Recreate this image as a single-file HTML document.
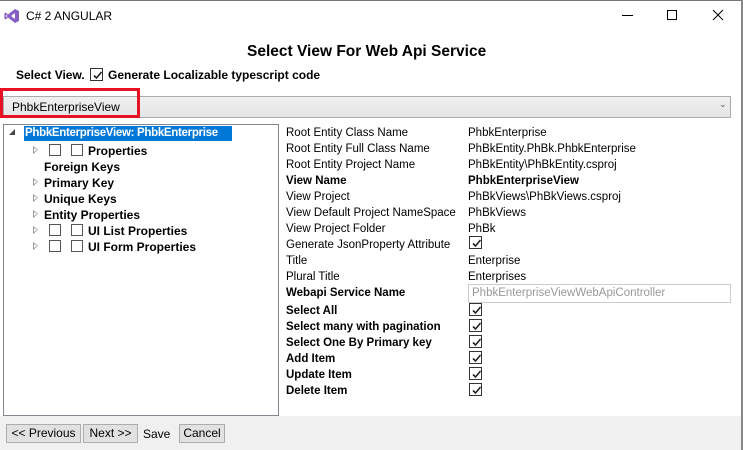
<!DOCTYPE html>
<html><head><meta charset="utf-8"><style>
*{margin:0;padding:0;box-sizing:border-box}
body{width:743px;height:450px;background:#fff;font-family:"Liberation Sans",sans-serif;font-size:11.5px;color:#000;position:relative;overflow:hidden}
.a{position:absolute;white-space:nowrap}
.b{font-weight:bold}
.cb{position:absolute;width:13px;height:13px;border:1px solid #333;background:#fff}
.cb svg{position:absolute;left:1px;top:1px}
.eb{position:absolute;width:12px;height:12px;border:1px solid #555;background:#fff}
.tri{position:absolute;width:0;height:0;border-left:5px solid #999;border-top:4px solid transparent;border-bottom:4px solid transparent}
.tri:after{content:"";position:absolute;left:-4px;top:-2px;border-left:3px solid #fff;border-top:2px solid transparent;border-bottom:2px solid transparent}
.btn{position:absolute;top:424px;height:19px;border:1px solid #adadad;background:#e1e1e1;font-size:12px;line-height:17px;padding:0 3px;white-space:nowrap;overflow:hidden;text-align:center}
.r{top:0}
</style></head><body>
<div class="a" style="left:0;top:0;width:743px;height:1px;background:#777"></div>
<div class="a" style="left:741px;top:0;width:2px;height:450px;background:#888"></div>
<svg class="a" style="left:4px;top:8px" width="16" height="16" viewBox="0 0 16 16"><path d="M11 1 L15 3 V13 L11 15 L4 9.5 L1.5 11.5 L0.5 11 V5 L1.5 4.5 L4 6.5 Z M11 5 L7 8 L11 11 Z M2 6.5 V9.5 L3.5 8 Z" fill="#865fc5"/></svg>
<div class="a" style="left:26px;top:9px;font-size:12px">C# 2 ANGULAR</div>
<div class="a" style="left:622px;top:15px;width:11px;height:1px;background:#000"></div>
<div class="a" style="left:667px;top:10px;width:10px;height:10px;border:1px solid #000"></div>
<svg class="a" style="left:712px;top:9px" width="12" height="12"><path d="M1 1L11 11M11 1L1 11" stroke="#000" stroke-width="1"/></svg>
<div class="a b" style="left:247px;top:43px;font-size:15.5px">Select View For Web Api Service</div>
<div class="a b" style="left:16px;top:68px;font-size:12px">Select View.</div>
<div class="cb" style="left:90px;top:68px"><svg width="11" height="11"><path d="M2 5.5L4.5 8L9.5 2" stroke="#222" stroke-width="1.6" fill="none"/></svg></div>
<div class="a b" style="left:108px;top:68px;font-size:12px">Generate Localizable typescript code</div>
<div class="a" style="left:3px;top:96px;width:728px;height:22px;border:1px solid #acacac;background:linear-gradient(#f0f0f0,#e5e5e5)"></div>
<div class="a" style="left:12px;top:100px;font-size:12px">PhbkEnterpriseView</div>
<div class="a" style="left:719px;top:99px;font-size:9px;color:#555">&#8964;</div>
<div class="a" style="left:0;top:88px;width:140px;height:30px;border:3px solid #e81123"></div>
<div class="a" style="left:3px;top:124px;width:276px;height:292px;border:1px solid #828790;background:#fff"></div>
<div class="a" style="left:9px;top:129px;width:0;height:0;border-right:6px solid #444;border-top:6px solid transparent"></div>
<div class="a b" style="left:24px;top:126px;width:208px;height:15px;background:#0078d7;color:#fff;padding-left:1px;line-height:15px;font-size:11.5px;letter-spacing:-0.3px;overflow:hidden">PhbkEnterpriseView: PhbkEnterprise</div>
<div class="tri" style="left:33px;top:146px"></div><div class="eb" style="left:49px;top:144px"></div><div class="eb" style="left:71px;top:144px"></div>
<div class="a b" style="left:88px;top:144px;font-size:12px">Properties</div>
<div class="a b" style="left:44px;top:160px;font-size:12px">Foreign Keys</div>
<div class="tri" style="left:33px;top:178px"></div><div class="a b" style="left:44px;top:176px;font-size:12px">Primary Key</div>
<div class="tri" style="left:33px;top:194px"></div><div class="a b" style="left:44px;top:192px;font-size:12px">Unique Keys</div>
<div class="tri" style="left:33px;top:210px"></div><div class="a b" style="left:44px;top:208px;font-size:12px">Entity Properties</div>
<div class="tri" style="left:33px;top:226px"></div><div class="eb" style="left:49px;top:224px"></div><div class="eb" style="left:71px;top:224px"></div><div class="a b" style="left:88px;top:224px;font-size:12px">UI List Properties</div>
<div class="tri" style="left:33px;top:242px"></div><div class="eb" style="left:49px;top:240px"></div><div class="eb" style="left:71px;top:240px"></div><div class="a b" style="left:88px;top:240px;font-size:12px">UI Form Properties</div>

<div class="a" style="left:286px;top:127px">Root Entity Class Name</div><div class="a" style="left:468px;top:127px">PhbkEnterprise</div>
<div class="a" style="left:286px;top:143px">Root Entity Full Class Name</div><div class="a" style="left:468px;top:143px">PhBkEntity.PhBk.PhbkEnterprise</div>
<div class="a" style="left:286px;top:159px">Root Entity Project Name</div><div class="a" style="left:468px;top:159px">PhBkEntity\PhBkEntity.csproj</div>
<div class="a b" style="left:286px;top:175px">View Name</div><div class="a b" style="left:468px;top:175px">PhbkEnterpriseView</div>
<div class="a" style="left:286px;top:191px">View Project</div><div class="a" style="left:468px;top:191px">PhBkViews\PhBkViews.csproj</div>
<div class="a" style="left:286px;top:207px">View Default Project NameSpace</div><div class="a" style="left:468px;top:207px">PhBkViews</div>
<div class="a" style="left:286px;top:223px">View Project Folder</div><div class="a" style="left:468px;top:223px">PhBk</div>
<div class="a" style="left:286px;top:239px">Generate JsonProperty Attribute</div>
<div class="a" style="left:286px;top:255px">Title</div><div class="a" style="left:468px;top:255px">Enterprise</div>
<div class="a" style="left:286px;top:271px">Plural Title</div><div class="a" style="left:468px;top:271px">Enterprises</div>
<div class="a b" style="left:286px;top:287px">Webapi Service Name</div>
<div class="a" style="left:468px;top:284px;width:263px;height:19px;border:1px solid #ccc;color:#999;padding-left:3px;line-height:17px">PhbkEnterpriseViewWebApiController</div>
<div class="a b" style="left:286px;top:305px">Select All</div>
<div class="a b" style="left:286px;top:321px">Select many with pagination</div>
<div class="a b" style="left:286px;top:337px">Select One By Primary key</div>
<div class="a b" style="left:286px;top:353px">Add Item</div>
<div class="a b" style="left:286px;top:369px">Update Item</div>
<div class="a b" style="left:286px;top:385px">Delete Item</div>
<div class="cb" style="left:469px;top:236px"><svg width="11" height="11"><path d="M2 5.5L4.5 8L9.5 2" stroke="#222" stroke-width="1.6" fill="none"/></svg></div>
<div class="cb" style="left:469px;top:303px"><svg width="11" height="11"><path d="M2 5.5L4.5 8L9.5 2" stroke="#222" stroke-width="1.6" fill="none"/></svg></div>
<div class="cb" style="left:469px;top:319px"><svg width="11" height="11"><path d="M2 5.5L4.5 8L9.5 2" stroke="#222" stroke-width="1.6" fill="none"/></svg></div>
<div class="cb" style="left:469px;top:335px"><svg width="11" height="11"><path d="M2 5.5L4.5 8L9.5 2" stroke="#222" stroke-width="1.6" fill="none"/></svg></div>
<div class="cb" style="left:469px;top:351px"><svg width="11" height="11"><path d="M2 5.5L4.5 8L9.5 2" stroke="#222" stroke-width="1.6" fill="none"/></svg></div>
<div class="cb" style="left:469px;top:367px"><svg width="11" height="11"><path d="M2 5.5L4.5 8L9.5 2" stroke="#222" stroke-width="1.6" fill="none"/></svg></div>
<div class="cb" style="left:469px;top:383px"><svg width="11" height="11"><path d="M2 5.5L4.5 8L9.5 2" stroke="#222" stroke-width="1.6" fill="none"/></svg></div>

<div class="a" style="left:0;top:416px;width:741px;height:34px;background:#f0f0f0"></div>
<div class="a" style="left:3px;top:414px;width:276px;height:2px;border:1px solid #828790;border-top:none;background:#fff"></div>
<div class="btn" style="left:6px;width:75px">&lt;&lt; Previous</div>
<div class="btn" style="left:83px;width:55px">Next &gt;&gt;</div>
<div class="a" style="left:143px;top:427px;font-size:12px">Save</div>
<div class="btn" style="left:179px;width:46px">Cancel</div>
</body></html>
